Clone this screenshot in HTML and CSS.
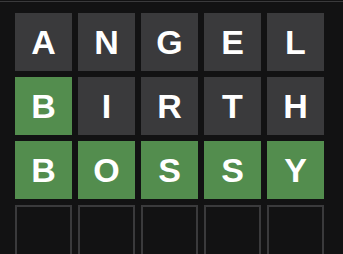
FILE: index.html
```html
<!DOCTYPE html>
<html>
<head>
<meta charset="utf-8">
<link rel="stylesheet" href="styles.css">
</head>
<body>
<div class="topline"></div>
<div class="board">
  <div class="tile absent">A</div><div class="tile absent">N</div><div class="tile absent">G</div><div class="tile absent">E</div><div class="tile absent">L</div>
  <div class="tile correct">B</div><div class="tile absent">I</div><div class="tile absent">R</div><div class="tile absent">T</div><div class="tile absent">H</div>
  <div class="tile correct">B</div><div class="tile correct">O</div><div class="tile correct">S</div><div class="tile correct">S</div><div class="tile correct">Y</div>
  <div class="tile empty"></div><div class="tile empty"></div><div class="tile empty"></div><div class="tile empty"></div><div class="tile empty"></div>
</div>
</body>
</html>
```
FILE: styles.css
```css
html, body {
  margin: 0;
  padding: 0;
  background: #121213;
  height: 254px;
  overflow: hidden;
}
.topline {
  margin-top: 1px;
  height: 1px;
  background: #3a3a3c;
}
.board {
  display: grid;
  grid-template-columns: repeat(5, 57px);
  grid-auto-rows: 58px;
  column-gap: 6px;
  row-gap: 6px;
  padding: 11px 0 0 15px;
}
.tile {
  display: flex;
  align-items: center;
  justify-content: center;
  font-family: "Liberation Sans", Arial, sans-serif;
  font-weight: bold;
  font-size: 34px;
  color: #ffffff;
  box-sizing: border-box;
}
.absent { background: #3a3a3c; }
.correct { background: #538d4e; }
.empty { border: 2px solid #3a3a3c; background: #121213; }
```
